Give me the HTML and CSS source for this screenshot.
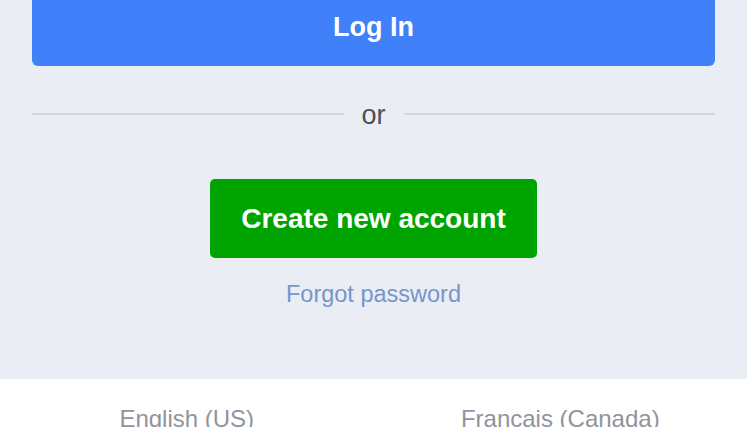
FILE: index.html
```html
<!DOCTYPE html>
<html lang="en">
<head>
<meta charset="utf-8">
<title>Log In</title>
<link rel="stylesheet" href="styles.css">
</head>
<body>
<main class="login">
  <button class="btn btn-login" type="button">Log In</button>
  <div class="divider">
    <span class="divider-line"></span>
    <span class="divider-text">or</span>
    <span class="divider-line"></span>
  </div>
  <div class="create-wrap">
    <button class="btn btn-create" type="button">Create new account</button>
  </div>
  <a class="forgot" href="#">Forgot password</a>
</main>
<footer class="footer">
  <span class="lang">English (US)</span>
  <span class="lang">Français (Canada)</span>
</footer>
</body>
</html>
```

FILE: styles.css
```css
* { box-sizing: border-box; }
html, body {
  margin: 0;
  padding: 0;
  height: 100%;
  overflow: hidden;
}
body {
  background: #ebedf5;
  font-family: "Liberation Sans", Arial, sans-serif;
  display: flex;
  flex-direction: column;
}
.login {
  padding: 0 32px;
  margin-top: -13px;
  display: flex;
  flex-direction: column;
  height: 392px;
  flex-shrink: 0;
}
.btn {
  border: none;
  color: #fff;
  font-family: "Liberation Sans", Arial, sans-serif;
  font-weight: bold;
  cursor: pointer;
}
.btn-login {
  width: 100%;
  height: 79px;
  background: #4080f8;
  border-radius: 6px;
  font-size: 27px;
  padding-top: 2px;
}
.divider {
  display: flex;
  align-items: center;
  gap: 18px;
  margin-top: 33px;
  height: 30px;
}
.divider-line {
  flex: 1;
  height: 2px;
  background: #d3d6dc;
}
.divider-text {
  font-size: 27px;
  color: #4b4f56;
  line-height: 30px;
  padding-top: 2px;
}
.create-wrap {
  display: flex;
  justify-content: center;
  margin-top: 50px;
}
.btn-create {
  width: 327px;
  height: 79px;
  background: #00a400;
  border-radius: 5px;
  font-size: 28px;
}
.forgot {
  align-self: center;
  margin-top: 22px;
  font-size: 23.5px;
  line-height: 28px;
  color: #7596c8;
  text-decoration: none;
}
.footer {
  flex: 1;
  background: #fff;
  display: grid;
  grid-template-columns: 1fr 1fr;
  padding-top: 26px;
}
.lang {
  text-align: center;
  font-size: 24px;
  color: #90949c;
  line-height: 28px;
}
```
